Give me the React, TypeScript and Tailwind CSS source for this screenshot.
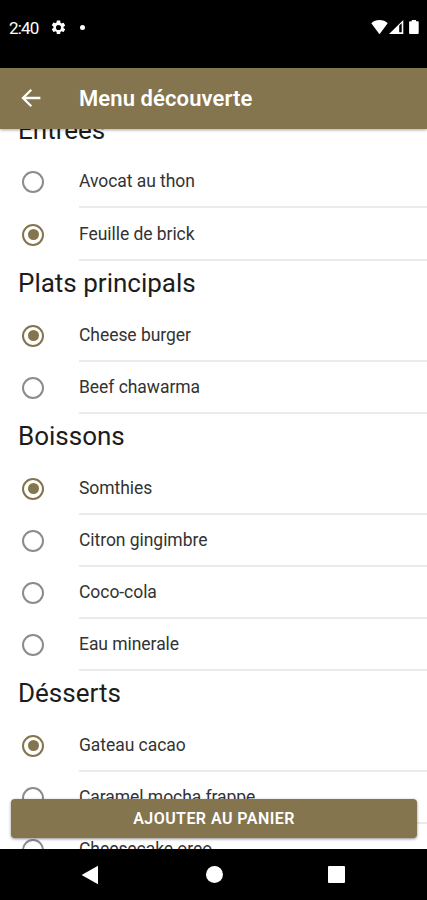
interface Option {
  label: string;
  selected?: boolean;
}

interface Section {
  title: string;
  options: Option[];
}

const sections: Section[] = [
  {
    title: 'Entrées',
    options: [{ label: 'Avocat au thon' }, { label: 'Feuille de brick', selected: true }],
  },
  {
    title: 'Plats principals',
    options: [{ label: 'Cheese burger', selected: true }, { label: 'Beef chawarma' }],
  },
  {
    title: 'Boissons',
    options: [
      { label: 'Somthies', selected: true },
      { label: 'Citron gingimbre' },
      { label: 'Coco-cola' },
      { label: 'Eau minerale' },
    ],
  },
  {
    title: 'Désserts',
    options: [
      { label: 'Gateau cacao', selected: true },
      { label: 'Caramel mocha frappe' },
      { label: 'Cheesecake oreo' },
    ],
  },
];

function StatusBar() {
  return (
    <div className="flex h-[68px] shrink-0 items-start bg-black pt-[18px] pr-[6px] pl-[9px] text-white">
      <span className="w-[41px] text-[17px] leading-5 tracking-[-0.8px]">2:40</span>
      <svg viewBox="0 0 24 24" className="mt-px h-[17px] w-[17px] fill-white">
        <path d="M19.14 12.94c.04-.3.06-.61.06-.94s-.02-.64-.07-.94l2.03-1.58a.49.49 0 0 0 .12-.61l-1.92-3.32a.49.49 0 0 0-.59-.22l-2.39.96a7 7 0 0 0-1.62-.94l-.36-2.54A.48.48 0 0 0 13.92 2h-3.84a.48.48 0 0 0-.48.41l-.36 2.54c-.59.24-1.13.57-1.62.94l-2.39-.96a.49.49 0 0 0-.59.22L2.72 8.47a.49.49 0 0 0 .12.61l2.03 1.58c-.05.3-.07.62-.07.94s.02.64.07.94l-2.03 1.58a.49.49 0 0 0-.12.61l1.92 3.32c.12.22.37.29.59.22l2.39-.96c.5.38 1.03.7 1.62.94l.36 2.54c.05.24.24.41.48.41h3.84c.24 0 .44-.17.47-.41l.36-2.54c.59-.24 1.13-.56 1.62-.94l2.39.96c.22.08.47 0 .59-.22l1.92-3.32a.49.49 0 0 0-.12-.61zM12 15.6a3.6 3.6 0 1 1 0-7.2 3.6 3.6 0 0 1 0 7.2z" />
      </svg>
      <span className="mt-[7px] ml-[13px] h-[5px] w-[5px] rounded-full bg-white" />
      <div className="mt-px ml-auto flex">
        <svg viewBox="0 0 50 16" className="h-4 w-[50px] fill-white">
          <path d="M8.5 15.2 0.3 4.2C2.4 2 5.3 1 8.5 1S14.6 2 16.7 4.2z" />
          <path fillRule="evenodd" d="M18 15 32.3 1V15zM28.2 6.6V13.2H30.7V4.2z" />
          <path d="M40.8 2.2V1h4.2v1.2h1.8q.9 0 .9.9V14q0 1-.9 1H39q-.9 0-.9-1V3.1q0-.9.9-.9z" />
        </svg>
      </div>
    </div>
  );
}

function AppBar() {
  return (
    <header className="relative z-10 flex h-[60.5px] shrink-0 items-center bg-[#84754e] pl-[21px] text-white shadow-[0_1px_3px_rgba(0,0,0,0.35)]">
      <svg viewBox="0 0 20 20" className="h-5 w-5 fill-none stroke-white stroke-[2.3]">
        <path d="M19.4 10H2M10.3 1.8 2 10l8.3 8.2" />
      </svg>
      <h1 className="ml-[38px] pt-px text-[22px] leading-7 font-semibold tracking-[0.1px]">Menu découverte</h1>
    </header>
  );
}

function Radio({ selected }: { selected?: boolean }) {
  return (
    <span
      className={
        selected
          ? 'flex h-[22px] w-[22px] items-center justify-center rounded-full border-2 border-[#84754e]'
          : 'h-[22px] w-[22px] rounded-full border-2 border-[#8c8c8c]'
      }
    >
      {selected && <span className="h-[11px] w-[11px] rounded-full bg-[#84754e]" />}
    </span>
  );
}

function OptionRow({ label, selected }: Option) {
  return (
    <li className="flex h-[52.1px] items-center pl-[22px]">
      <Radio selected={selected} />
      <div className="ml-[35px] flex h-full flex-1 items-center border-b-2 border-[#ebebeb]">
        <span className="text-[17.5px] leading-6 tracking-[-0.05px] text-[#333333]">{label}</span>
      </div>
    </li>
  );
}

export default function App() {
  return (
    <div className="flex h-[900px] w-[427px] flex-col overflow-hidden bg-white font-[Roboto,sans-serif]">
      <StatusBar />
      <AppBar />
      <main className="relative h-[720.5px] shrink-0 overflow-hidden">
        <div className="-mt-[21px]">
          {sections.map((section) => (
            <section key={section.title}>
              <h2 className="flex h-[48.9px] items-center pb-[4px] pl-[18px] text-[26px] leading-8 text-[#1c1c1c]">
                {section.title}
              </h2>
              <ul>
                {section.options.map((option) => (
                  <OptionRow key={option.label} {...option} />
                ))}
              </ul>
            </section>
          ))}
        </div>
        <button className="absolute right-[10px] bottom-[11px] left-[11px] h-[39px] rounded-[4px] bg-[#84754e] text-[16px] font-semibold tracking-[0.45px] text-white shadow-[0_1px_3px_rgba(0,0,0,0.45)]">
          AJOUTER AU PANIER
        </button>
      </main>
      <nav className="flex flex-1 items-center bg-black pl-[81px]">
        <svg viewBox="0 0 18 20" className="h-5 w-[18px] fill-white">
          <path d="M17 .8v18.4L.6 10z" />
        </svg>
        <span className="ml-[106.5px] h-[17px] w-[17px] rounded-full bg-white" />
        <span className="ml-[105.5px] h-[17px] w-[17px] rounded-[1px] bg-white" />
      </nav>
    </div>
  );
}
